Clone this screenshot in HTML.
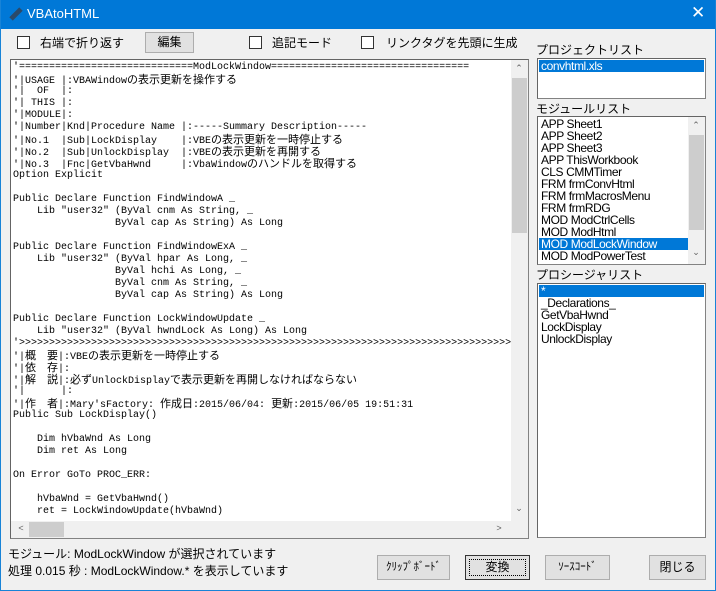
<!DOCTYPE html>
<html><head><meta charset="utf-8"><style>
*{margin:0;padding:0;box-sizing:border-box}
body{width:716px;height:591px;overflow:hidden;background:#f0f0f0;font-family:"Liberation Sans","Noto Sans CJK JP",sans-serif;font-size:12px;color:#000;position:relative}
.a{position:absolute}
#tb{left:0;top:0;width:716px;height:29px;background:#0078d7;color:#fff}
#frame{left:0;top:0;width:716px;height:591px;border:1px solid #1883d7;border-top:none}
.cb{width:13px;height:13px;border:1px solid #333;background:#fff}
.btn{background:#e1e1e1;border:1px solid #adadad;text-align:center;font-size:12px}
.box{background:#fff;border:1px solid #828282;border-top-color:#646464;border-left-color:#646464}
.code{font-family:"Liberation Mono","Noto Sans CJK JP",monospace;font-size:10px}
.code div{height:12px;line-height:12px;white-space:pre;overflow:visible}
.code .j{font-size:11px;font-family:"Noto Sans CJK JP",sans-serif;line-height:10px}
.li{height:12px;line-height:12px;font-size:12px;padding-left:2px;white-space:nowrap;letter-spacing:-0.4px}
.sel{background:#0078d7;color:#fff}
.sb{background:#f0f0f0}
.th{background:#cdcdcd}
.ar{font-size:9px;color:#606060;text-align:center;width:16px}
</style></head><body>
<div class="a" id="tb"><div class="a" style="left:9px;top:7px;width:14px;height:14px;background:#2b4a6a;transform:rotate(45deg) scaleX(.35)"></div><div class="a" style="left:27px;top:6px;font-size:13px">VBAtoHTML</div><div class="a" style="left:691px;top:3px;font-size:17px">✕</div></div>
<div class="a" id="frame"></div>

<div class="a cb" style="left:17px;top:36px"></div><div class="a" style="left:40px;top:34px">右端で折り返す</div>
<div class="a btn" style="left:145px;top:32px;width:49px;height:21px;line-height:19px">編集</div>
<div class="a cb" style="left:249px;top:36px"></div><div class="a" style="left:272px;top:34px">追記モード</div>
<div class="a cb" style="left:361px;top:36px"></div><div class="a" style="left:386px;top:34px">リンクタグを先頭に生成</div>

<div class="a box" style="left:10px;top:59px;width:519px;height:480px;overflow:hidden">
<div class="a code" style="left:2px;top:2px">
<div>'=============================ModLockWindow=================================</div>
<div>'|USAGE |:VBAWindow<span class="j">の表示更新を操作する</span></div>
<div>'|  OF  |:</div>
<div>'| THIS |:</div>
<div>'|MODULE|:</div>
<div>'|Number|Knd|Procedure Name |:-----Summary Description-----</div>
<div>'|No.1  |Sub|LockDisplay    |:VBE<span class="j">の表示更新を一時停止する</span></div>
<div>'|No.2  |Sub|UnlockDisplay  |:VBE<span class="j">の表示更新を再開する</span></div>
<div>'|No.3  |Fnc|GetVbaHwnd     |:VbaWindow<span class="j">のハンドルを取得する</span></div>
<div>Option Explicit</div>
<div> </div>
<div>Public Declare Function FindWindowA _</div>
<div>    Lib "user32" (ByVal cnm As String, _</div>
<div>                 ByVal cap As String) As Long</div>
<div> </div>
<div>Public Declare Function FindWindowExA _</div>
<div>    Lib "user32" (ByVal hpar As Long, _</div>
<div>                 ByVal hchi As Long, _</div>
<div>                 ByVal cnm As String, _</div>
<div>                 ByVal cap As String) As Long</div>
<div> </div>
<div>Public Declare Function LockWindowUpdate _</div>
<div>    Lib "user32" (ByVal hwndLock As Long) As Long</div>
<div>'&gt;&gt;&gt;&gt;&gt;&gt;&gt;&gt;&gt;&gt;&gt;&gt;&gt;&gt;&gt;&gt;&gt;&gt;&gt;&gt;&gt;&gt;&gt;&gt;&gt;&gt;&gt;&gt;&gt;&gt;&gt;&gt;&gt;&gt;&gt;&gt;&gt;&gt;&gt;&gt;&gt;&gt;&gt;&gt;&gt;&gt;&gt;&gt;&gt;&gt;&gt;&gt;&gt;&gt;&gt;&gt;&gt;&gt;&gt;&gt;&gt;&gt;&gt;&gt;&gt;&gt;&gt;&gt;&gt;&gt;&gt;&gt;&gt;&gt;&gt;&gt;&gt;&gt;&gt;&gt;&gt;&gt;&gt;</div>
<div>'|<span class="j">概　要</span>|:VBE<span class="j">の表示更新を一時停止する</span></div>
<div>'|<span class="j">依　存</span>|:</div>
<div>'|<span class="j">解　説</span>|:<span class="j">必ず</span>UnlockDisplay<span class="j">で表示更新を再開しなければならない</span></div>
<div>'|      |:</div>
<div>'|<span class="j">作　者</span>|:Mary'sFactory: <span class="j">作成日</span>:2015/06/04: <span class="j">更新</span>:2015/06/05 19:51:31</div>
<div>Public Sub LockDisplay()</div>
<div> </div>
<div>    Dim hVbaWnd As Long</div>
<div>    Dim ret As Long</div>
<div> </div>
<div>On Error GoTo PROC_ERR:</div>
<div> </div>
<div>    hVbaWnd = GetVbaHwnd()</div>
<div>    ret = LockWindowUpdate(hVbaWnd)</div>
</div>
<div class="a sb" style="left:500px;top:0;width:17px;height:461px"><div class="a ar" style="top:3px">⌃</div><div class="a th" style="left:1px;top:18px;width:15px;height:155px"></div><div class="a ar" style="top:443px">⌄</div></div>
<div class="a sb" style="left:0;top:461px;width:500px;height:17px"><div class="a ar" style="left:2px;top:2px">&lt;</div><div class="a th" style="left:18px;top:1px;width:35px;height:15px"></div><div class="a ar" style="left:480px;top:2px">&gt;</div></div>
<div class="a sb" style="left:500px;top:461px;width:17px;height:17px"></div>
</div>

<div class="a" style="left:536px;top:41px">プロジェクトリスト</div>
<div class="a box" style="left:537px;top:58px;width:169px;height:41px;padding:1px">
<div class="li sel">convhtml.xls</div></div>

<div class="a" style="left:536px;top:100px">モジュールリスト</div>
<div class="a box" style="left:537px;top:116px;width:169px;height:149px;padding:1px;overflow:hidden">
<div class="li">APP Sheet1</div><div class="li">APP Sheet2</div><div class="li">APP Sheet3</div><div class="li">APP ThisWorkbook</div><div class="li">CLS CMMTimer</div><div class="li">FRM frmConvHtml</div><div class="li">FRM frmMacrosMenu</div><div class="li">FRM frmRDG</div><div class="li">MOD ModCtrlCells</div><div class="li">MOD ModHtml</div><div class="li sel" style="width:149px">MOD ModLockWindow</div><div class="li">MOD ModPowerTest</div>
<div class="a sb" style="left:150px;top:0;width:17px;height:147px"><div class="a ar" style="top:3px">⌃</div><div class="a th" style="left:1px;top:18px;width:15px;height:95px"></div><div class="a ar" style="top:130px">⌄</div></div>
</div>

<div class="a" style="left:536px;top:266px">プロシージャリスト</div>
<div class="a box" style="left:537px;top:283px;width:169px;height:255px;padding:1px">
<div class="li sel">*</div><div class="li">_Declarations_</div><div class="li">GetVbaHwnd</div><div class="li">LockDisplay</div><div class="li">UnlockDisplay</div></div>

<div class="a" style="left:8px;top:545px">モジュール: ModLockWindow が選択されています</div>
<div class="a" style="left:8px;top:562px">処理 0.015 秒 : ModLockWindow.* を表示しています</div>

<div class="a btn" style="left:377px;top:555px;width:73px;height:25px;line-height:23px;font-size:11px">ｸﾘｯﾌﾟﾎﾞｰﾄﾞ</div>
<div class="a btn" style="left:465px;top:555px;width:65px;height:25px;line-height:23px;border:1px solid #333;outline:1px dotted #000;outline-offset:-5px">変換</div>
<div class="a btn" style="left:545px;top:555px;width:65px;height:25px;line-height:23px;font-size:11px">ｿｰｽｺｰﾄﾞ</div>
<div class="a btn" style="left:649px;top:555px;width:57px;height:25px;line-height:23px">閉じる</div>
</body></html>
